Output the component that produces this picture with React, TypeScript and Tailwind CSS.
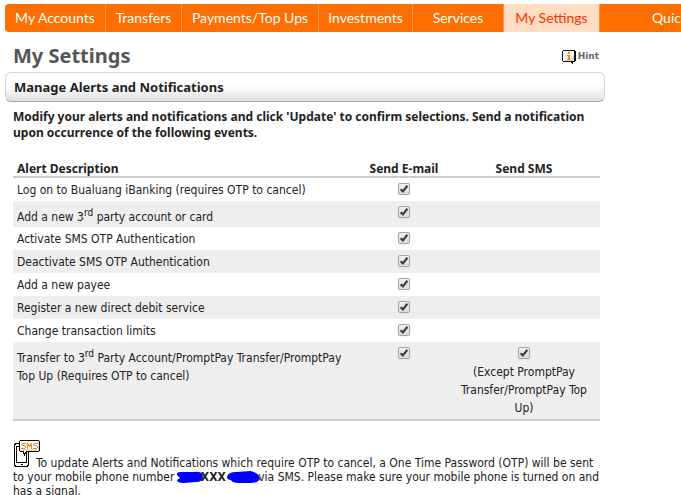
import { Fragment } from 'react';

const navItems = [
  { label: 'My Accounts', width: 'w-[101px]' },
  { label: 'Transfers', width: 'w-[76px]' },
  { label: 'Payments/Top Ups', width: 'w-[137px]' },
  { label: 'Investments', width: 'w-[94px]' },
  { label: 'Services', width: 'w-[91px]' },
  { label: 'My Settings', width: 'w-[96px]', active: true },
];

type Alert = {
  id: string;
  parts: string[];
  smsNote?: string;
};

// parts are joined with a superscript "rd"
const alerts: Alert[] = [
  { id: 'logon', parts: ['Log on to Bualuang iBanking (requires OTP to cancel)'] },
  { id: 'third-party', parts: ['Add a new 3', ' party account or card'] },
  { id: 'activate-otp', parts: ['Activate SMS OTP Authentication'] },
  { id: 'deactivate-otp', parts: ['Deactivate SMS OTP Authentication'] },
  { id: 'payee', parts: ['Add a new payee'] },
  { id: 'direct-debit', parts: ['Register a new direct debit service'] },
  { id: 'limits', parts: ['Change transaction limits'] },
  {
    id: 'transfer',
    parts: ['Transfer to 3', ' Party Account/PromptPay Transfer/PromptPay Top Up (Requires OTP to cancel)'],
    smsNote: '(Except PromptPay Transfer/PromptPay Top Up)',
  },
];

function Checkbox({ id, labelledBy }: { id: string; labelledBy: string }) {
  return (
    <span className="mx-auto grid h-3 w-3">
      <input
        id={id}
        type="checkbox"
        defaultChecked
        aria-labelledby={labelledBy}
        className="peer col-start-1 row-start-1 h-3 w-3 appearance-none rounded-xs border border-[#a6a6a6] bg-linear-to-b from-[#f0f0f0] to-[#dcdcdc] shadow-xs"
      />
      <svg
        viewBox="0 0 12 12"
        className="pointer-events-none invisible col-start-1 row-start-1 h-3 w-3 peer-checked:visible"
        fill="none"
        stroke="#404040"
        strokeWidth="2.2"
      >
        <path d="M2.6 6.2 L4.9 8.4 L9.4 2.8" />
      </svg>
    </span>
  );
}

function HintIcon() {
  return (
    <svg width="14" height="14" viewBox="0 0 14 14" shapeRendering="crispEdges">
      <path d="M1 0h12v1h1v10h-1v1h-2v2h-1v-1h-1v-1H1v-1H0V1h1z" fill="#111" />
      <path d="M1 1h11v10H1z" fill="#fff" />
      <path d="M9 6h3v5H3v-1h5V8h1z" fill="#ddd" />
      <path d="M6 2h2v2H6zM5 5h3v4h1v1H5V9h1V6H5z" fill="#f80" />
    </svg>
  );
}

function SmsIcon() {
  return (
    <svg
      width="27"
      height="27"
      viewBox="0 0 27 27"
      className="-mr-1 inline-block align-baseline"
      shapeRendering="crispEdges"
    >
      <path d="M2 3h13v1h1v22h-1v1H2v-1H1V4h1z" fill="#000" />
      <path d="M3 4h11v1h1v20h-1v1H3v-1H2V5h1z" fill="#fff" />
      <path d="M3 6h11v17H3z" fill="#000" />
      <path d="M4 7h9v15H4z" fill="#fff" />
      <path d="M8 24h2v1H8z" fill="#000" />
      <path d="M7 0h19v1h1v10h-1v1H14v1h-1v1h-1v2h-1v-2h-1v-2H7v-1H6V1h1z" fill="#000" />
      <path d="M7 1h19v10H13v1h-1v1h-1v-2H7z" fill="#fff" />
      <path d="M7 9h18V1h1v10H7z" fill="#ddd" />
      <g fill="#ff8a00">
        <path d="M9 3h4v1H9zM8 4h1v1H8zM9 5h3v1H9zM12 6h1v2h-1zM8 8h4v1H8z" />
        <path d="M14 3h1v6h-1zM18 3h1v6h-1zM15 4h1v2h-1zM17 4h1v2h-1zM16 5h1v2h-1z" />
        <path d="M21 3h4v1h-4zM20 4h1v1h-1zM21 5h3v1h-3zM24 6h1v2h-1zM20 8h4v1h-4z" />
      </g>
    </svg>
  );
}

// Hand-drawn marker stroke hiding part of the phone number
function Redaction({ width, path }: { width: number; path: string }) {
  return (
    <svg
      width={width}
      height="13"
      viewBox={`0 0 ${width} 13`}
      className="-mx-0.5 -my-1 inline-block align-middle"
      fill="#00f"
    >
      <path d={path} />
    </svg>
  );
}

export default function App() {
  return (
    <div className="min-h-screen overflow-hidden bg-white pt-1 pl-[5px] font-['DejaVu_Sans_Condensed','DejaVu_Sans',sans-serif] text-[12px] text-[#222]">
      <nav className="flex h-7 overflow-hidden rounded-l-sm bg-[#ff6f00] font-['Lato',sans-serif] text-[14px] leading-7 whitespace-nowrap text-white">
        {navItems.map((item) => (
          <a
            key={item.label}
            href="#"
            className={`shrink-0 border-r border-[#ff934a] text-center ${item.width} ${
              item.active ? 'bg-[#ffdcc2] text-[#ff3300]' : ''
            }`}
          >
            {item.label}
          </a>
        ))}
        <a href="#" className="min-w-0 flex-1 overflow-hidden pl-13">
          Quick
        </a>
      </nav>

      <main className="max-w-[600px]">
        <header className="flex h-10 items-center justify-between pt-2 pr-1.5 pl-2">
          <h1 className="font-['Noto_Sans',sans-serif] text-[20px] font-bold text-[#555]">My Settings</h1>
          <a
            href="#"
            className="flex items-center gap-0.5 pt-0.5 font-['DejaVu_Sans',sans-serif] text-[9px] font-bold text-[#666]"
          >
            <HintIcon />
            Hint
          </a>
        </header>

        <h2 className="h-[30px] rounded-md border border-[#d6d6d6] border-b-[#aaa] bg-linear-to-b from-white from-45% to-[#dfdfdf] pl-2 font-['Noto_Sans',sans-serif] text-[13px] leading-7 font-bold">
          Manage Alerts and Notifications
        </h2>

        <div className="pr-[5px] pl-2">
          <p className="pt-[7px] font-['Noto_Sans',sans-serif] leading-4 font-bold">
            Modify your alerts and notifications and click &apos;Update&apos; to confirm selections. Send a notification
            upon occurrence of the following events.
          </p>

          <table className="mt-5 w-full table-fixed border-b-2 border-[#ccc] leading-[18px]">
            <thead className="border-b-2 border-[#ccc] font-['Noto_Sans',sans-serif] leading-[15px]">
              <tr>
                <th className="pl-1 text-left">Alert Description</th>
                <th className="w-[88px]">Send E-mail</th>
                <th className="w-[152px]">Send SMS</th>
              </tr>
            </thead>
            <tbody>
              {alerts.map((alert) => (
                <tr key={alert.id} className="align-top even:bg-[#eee]">
                  <td className={alert.parts.length > 1 ? 'pt-[7px] pb-px pl-1' : 'pt-[3px] pb-[2px] pl-1'}>
                    <label id={`${alert.id}-label`} htmlFor={`${alert.id}-email`}>
                      {alert.parts.map((part, i) => (
                        <Fragment key={part}>
                          {i > 0 && <sup className="text-[10px]">rd</sup>}
                          {part}
                        </Fragment>
                      ))}
                    </label>
                  </td>
                  <td className="pt-[5px]">
                    <Checkbox id={`${alert.id}-email`} labelledBy={`${alert.id}-label`} />
                  </td>
                  <td className="px-2 pt-[5px] text-center">
                    {alert.smsNote && (
                      <>
                        <Checkbox id={`${alert.id}-sms`} labelledBy={`${alert.id}-note`} />
                        <label id={`${alert.id}-note`} htmlFor={`${alert.id}-sms`} className="block pt-1 pb-[2px]">
                          {alert.smsNote}
                        </label>
                      </>
                    )}
                  </td>
                </tr>
              ))}
            </tbody>
          </table>

          <p className="pt-[19px] leading-[14px]">
            <SmsIcon />
            To update Alerts and Notifications which require OTP to cancel, a One Time Password (OTP) will be sent to
            your mobile phone number{' '}
            <Redaction width={27} path="M1 4Q0 1 5 1L18 1Q26 0 27 5Q27 11 20 11L8 12Q1 12 1 9L4 7Z" />
            <strong>XXX</strong>{' '}
            <Redaction width={33} path="M0 6Q1 1 9 1L24 0Q32 2 33 8Q31 12 23 12L12 12Q5 12 4 9Q0 9 0 6Z" />
            via SMS. Please make sure your mobile phone is turned on and has a signal.
          </p>
        </div>
      </main>
    </div>
  );
}
